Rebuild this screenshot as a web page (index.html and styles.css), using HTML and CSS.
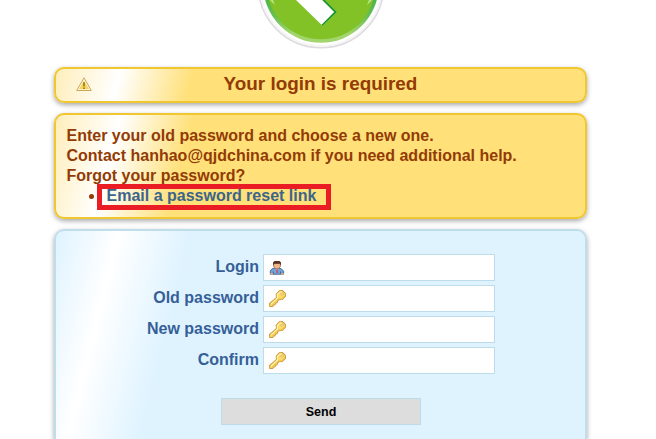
FILE: index.html
```html
<!DOCTYPE html>
<html lang="en">
<head>
<meta charset="utf-8">
<title>Login</title>
<link rel="stylesheet" href="styles.css">
</head>
<body>
<svg width="0" height="0" class="defs">
  <symbol id="key" viewBox="0 0 16 16">
    <path d="M7 7.2 6.8 3.9 9.8.8 12.6.5 15.4 3.2 15.5 6 12.4 9 9.3 9.1 8 10.4 7.6 12 6 12.3 5.7 13.9 4.1 14.2 3.5 15.5.8 15.5.5 12.8Z" fill="#fbdc68" stroke="#cf9a3c"/>
    <path d="M1.8 13.3 8 7.4 7.9 4.3 10.2 2 12.2 1.7" fill="none" stroke="#fff2a8" stroke-width="1.2"/>
    <path d="M2.8 14 8.6 8.2 12 8 14.3 5.6" fill="none" stroke="#f0c54c" stroke-width=".8"/>
    <circle cx="12.3" cy="3.8" r="1.1" fill="#fffdf0" stroke="#c9993b" stroke-width=".6"/>
  </symbol>
  <symbol id="user" viewBox="0 0 16 16">
    <path d="M1.3 14.2V11L3.3 8.7 6 8H9.2L12.3 8.8 14.6 11.2V14.2Z" fill="#72a4d9" stroke="#426c9e"/>
    <path d="M4.3 11.5V14M11.6 11.5V14" stroke="#426c9e"/>
    <path d="M6 8 8 10.3 10 8V7H6Z" fill="#edf3fa"/>
    <path d="M7.4 9H8.7L9 13H7.2Z" fill="#c95364"/>
    <path d="M4.6 3.5H11.4V6.3L9.8 8.5H6.2L4.6 6.3Z" fill="#efb58c" stroke="#9c623f" stroke-width=".7"/>
    <path d="M4 5.5V2.4L5.5 1H10.5L12 2.4V5.5L10.8 3.8H5.4Z" fill="#583225"/>
    <path d="M1.3 13H4V14.7H1.3ZM12 13H14.7V14.7H12Z" fill="#e6a57d"/>
  </symbol>
</svg>
<main class="page">
  <header class="logo">
    <svg width="130" height="52" viewBox="256 0 130 52">
      <defs>
        <linearGradient id="rim" x1="0" y1="0" x2="0" y2="42" gradientUnits="userSpaceOnUse">
          <stop offset="0" stop-color="#4fb64b"/>
          <stop offset=".4" stop-color="#69bf55"/>
          <stop offset=".8" stop-color="#a3d56e"/>
        </linearGradient>
      </defs>
      <circle cx="321" cy="-15" r="62.8" fill="#fff" stroke="#dedbe0" stroke-width="1.6"/>
      <circle cx="321" cy="-15" r="61" fill="none" stroke="#f5f4f5" stroke-width="1.5"/>
      <circle cx="321" cy="-15" r="57.8" fill="url(#rim)"/>
      <circle cx="321" cy="-15" r="54.3" fill="#82c226"/>
      <path d="M270 0H273L275 5ZM372 0H369L367 5Z" fill="#bee28a"/>
      <path d="M323.5 0 335.5 12 322 25" fill="none" stroke="#119345" stroke-width="1.6"/>
      <path d="M296 0H322L334 12 321.5 24.8Z" fill="#fff"/>
    </svg>
  </header>
  <section class="box warn notice">
    <svg class="alert" width="16" height="15" viewBox="0 0 16 15">
      <path d="M8 .8 15.3 13.5H.7Z" fill="#fffbe5" stroke="#cba75b"/>
      <path d="M8 3.5 13.2 12.3H2.8Z" fill="#f6d75e"/>
      <path d="M8 5.3V9.5M8 10.5V12" stroke="#a67c28" stroke-width="1.8"/>
    </svg>
    <h1>Your login is required</h1>
  </section>
  <section class="box warn help">
    <p>Enter your old password and choose a new one.</p>
    <p>Contact hanhao@qjdchina.com if you need additional help.</p>
    <p>Forgot your password?</p>
    <ul><li><a class="reset">Email a password reset link</a></li></ul>
  </section>
  <form class="box login">
    <label class="row"><span>Login</span><span class="field"><svg width="16" height="16"><use href="#user"/></svg></span></label>
    <label class="row"><span>Old password</span><span class="field"><svg width="17" height="17"><use href="#key"/></svg></span></label>
    <label class="row"><span>New password</span><span class="field"><svg width="17" height="17"><use href="#key"/></svg></span></label>
    <label class="row"><span>Confirm</span><span class="field"><svg width="17" height="17"><use href="#key"/></svg></span></label>
    <button type="button">Send</button>
  </form>
</main>
</body>
</html>
```
FILE: styles.css
```css
* { box-sizing: border-box; }
body {
  margin: 0;
  background: #fff;
  font: bold 16px/20px "Liberation Sans", Arial, sans-serif;
}
.defs { display: none; }
.page { width: 533px; margin-left: 54px; }
.logo { height: 67px; padding-left: 202px; }
.logo svg { display: block; }
.box {
  border: 2px solid;
  border-radius: 10px;
  margin-bottom: 10px;
  box-shadow: 0 2px 5px rgba(0, 0, 0, .35);
}
.warn {
  color: #933b05;
  border-color: #f1c72f;
  background: linear-gradient(104deg, #ffeebb 0, #fff 63px, #ffe079 134px);
}
.notice {
  height: 36px;
  display: grid;
  grid-template-columns: 20px 1fr 20px;
  align-items: center;
  padding: 0 20px;
}
.alert { margin-top: -2px; }
.notice h1 { margin: -2px 0 0; font-size: 18.9px; text-align: center; line-height: 30px; }
.help { height: 106px; padding: 11px 11px 11px 10.5px; }
.help p, .help ul { margin: 0; }
.help ul { padding-left: 30px; height: 20px; list-style: none; }
.help li { display: flex; align-items: flex-start; margin-left: -7.5px; }
.help li::before {
  content: "";
  width: 5px;
  height: 5px;
  margin: 8px 3px 0 0;
  border-radius: 50%;
  background: #933b05;
}
.reset {
  width: 234px;
  height: 26px;
  margin-top: -2px;
  padding-left: 4.5px;
  line-height: 14px;
  border: 5px solid #ea1c24;
  color: #3b658a;
}
.login {
  height: 210px;
  margin-bottom: 0;
  padding-top: 23px;
  color: #365f98;
  border-color: #c0deea;
  border-bottom: 0;
  border-radius: 10px 10px 0 0;
  background: linear-gradient(104deg, #dff3ff 0, #fff 61px, #dff3ff 130px);
}
.row {
  display: grid;
  grid-template-columns: 203px 232px;
  column-gap: 4px;
  height: 27px;
  margin-bottom: 4px;
  line-height: 25px;
  text-align: right;
}
.field {
  display: flex;
  align-items: center;
  padding-left: 5px;
  background: #fff;
  border: 1px solid #bddcea;
}
.login button {
  display: block;
  width: 200px;
  height: 27px;
  margin: 24px 0 0 165px;
  padding: 0;
  border: 1px solid #bddcea;
  background: #ddd;
  color: #000;
  font: bold 12.5px "Liberation Sans", Arial, sans-serif;
}
```
